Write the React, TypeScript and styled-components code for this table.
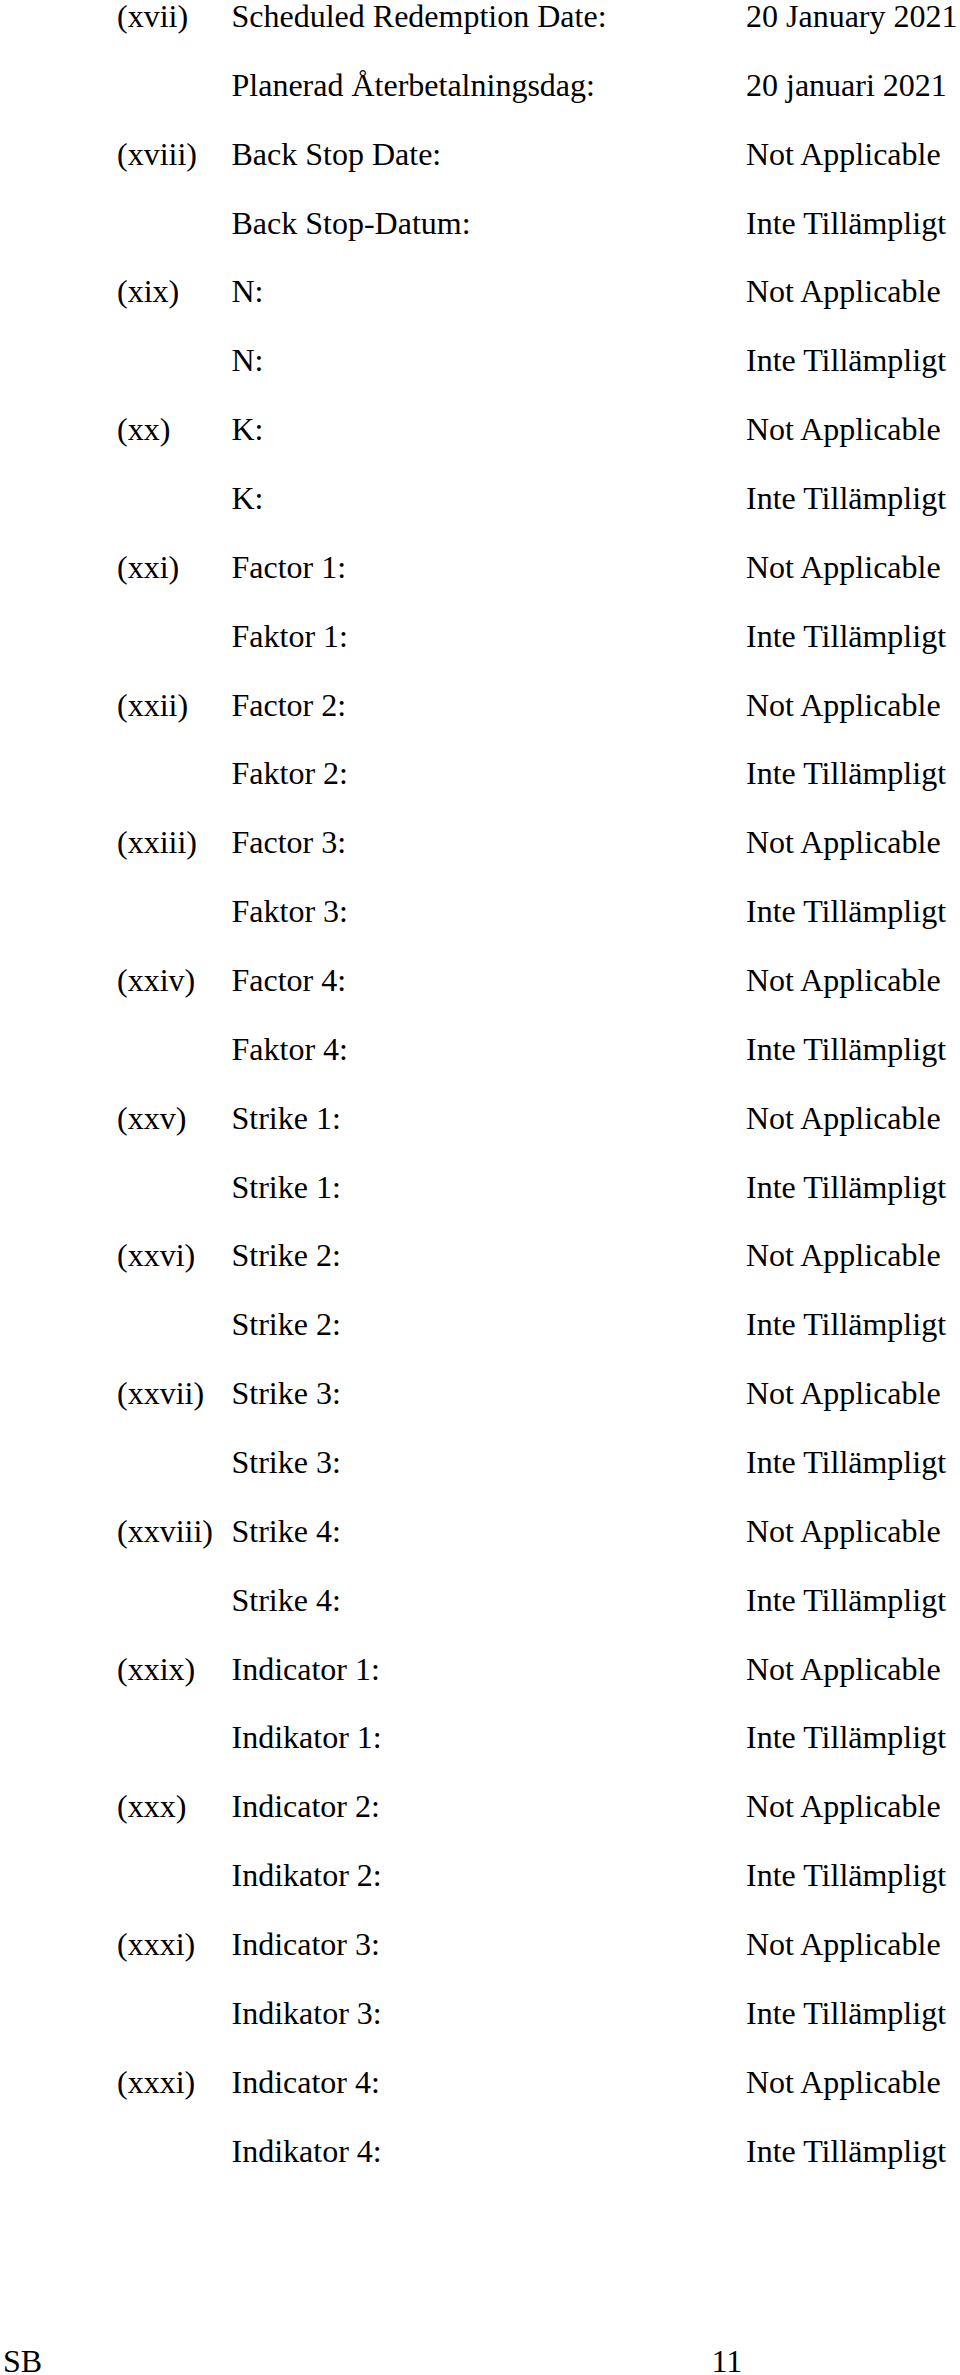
import React from "react";
import styled, { createGlobalStyle } from "styled-components";

const GlobalStyle = createGlobalStyle`
  html, body {
    margin: 0;
    padding: 0;
    background: #ffffff;
  }
  body {
    font-family: "Liberation Serif", "Times New Roman", serif;
    color: #000000;
  }
`

const Page = styled.div`
  width: 960px;
  min-height: 2375px;
  overflow: hidden;
`

const TermList = styled.div`
  display: flex;
  flex-direction: column;
  gap: 36.87px;
`

const TermRow = styled.div`
  display: grid;
  grid-template-columns: 114.5px 514.5px auto;
  padding-left: 117px;
  font-size: 32px;
  line-height: 32px;
  white-space: nowrap;
`

const Number = styled.span``
const Label = styled.span``
const Value = styled.span``

const Footer = styled.div`
  display: grid;
  grid-template-columns: 708.5px auto;
  padding-left: 3px;
  margin-top: 178px;
  font-size: 32px;
  line-height: 32px;
`

type Term = {
  num: string;
  en: string;
  sv: string;
  enValue?: string;
  svValue?: string;
}

const terms: Term[] = [
  { num: "(xvii)", en: "Scheduled Redemption Date:", sv: "Planerad Återbetalningsdag:", enValue: "20 January 2021", svValue: "20 januari 2021" },
  { num: "(xviii)", en: "Back Stop Date:", sv: "Back Stop-Datum:" },
  { num: "(xix)", en: "N:", sv: "N:" },
  { num: "(xx)", en: "K:", sv: "K:" },
  { num: "(xxi)", en: "Factor 1:", sv: "Faktor 1:" },
  { num: "(xxii)", en: "Factor 2:", sv: "Faktor 2:" },
  { num: "(xxiii)", en: "Factor 3:", sv: "Faktor 3:" },
  { num: "(xxiv)", en: "Factor 4:", sv: "Faktor 4:" },
  { num: "(xxv)", en: "Strike 1:", sv: "Strike 1:" },
  { num: "(xxvi)", en: "Strike 2:", sv: "Strike 2:" },
  { num: "(xxvii)", en: "Strike 3:", sv: "Strike 3:" },
  { num: "(xxviii)", en: "Strike 4:", sv: "Strike 4:" },
  { num: "(xxix)", en: "Indicator 1:", sv: "Indikator 1:" },
  { num: "(xxx)", en: "Indicator 2:", sv: "Indikator 2:" },
  { num: "(xxxi)", en: "Indicator 3:", sv: "Indikator 3:" },
  { num: "(xxxi)", en: "Indicator 4:", sv: "Indikator 4:" },
]

const App: React.FC = () => {
  return (
    <Page>
      <GlobalStyle />
      <TermList>
        {terms.map((term, index) => (
          <React.Fragment key={index}>
            <TermRow>
              <Number>{term.num}</Number>
              <Label>{term.en}</Label>
              <Value>{term.enValue ?? "Not Applicable"}</Value>
            </TermRow>
            <TermRow>
              <Number></Number>
              <Label>{term.sv}</Label>
              <Value>{term.svValue ?? "Inte Tillämpligt"}</Value>
            </TermRow>
          </React.Fragment>
        ))}
      </TermList>
      <Footer>
        <span>SB</span>
        <span>11</span>
      </Footer>
    </Page>
  );
}

export default App;
